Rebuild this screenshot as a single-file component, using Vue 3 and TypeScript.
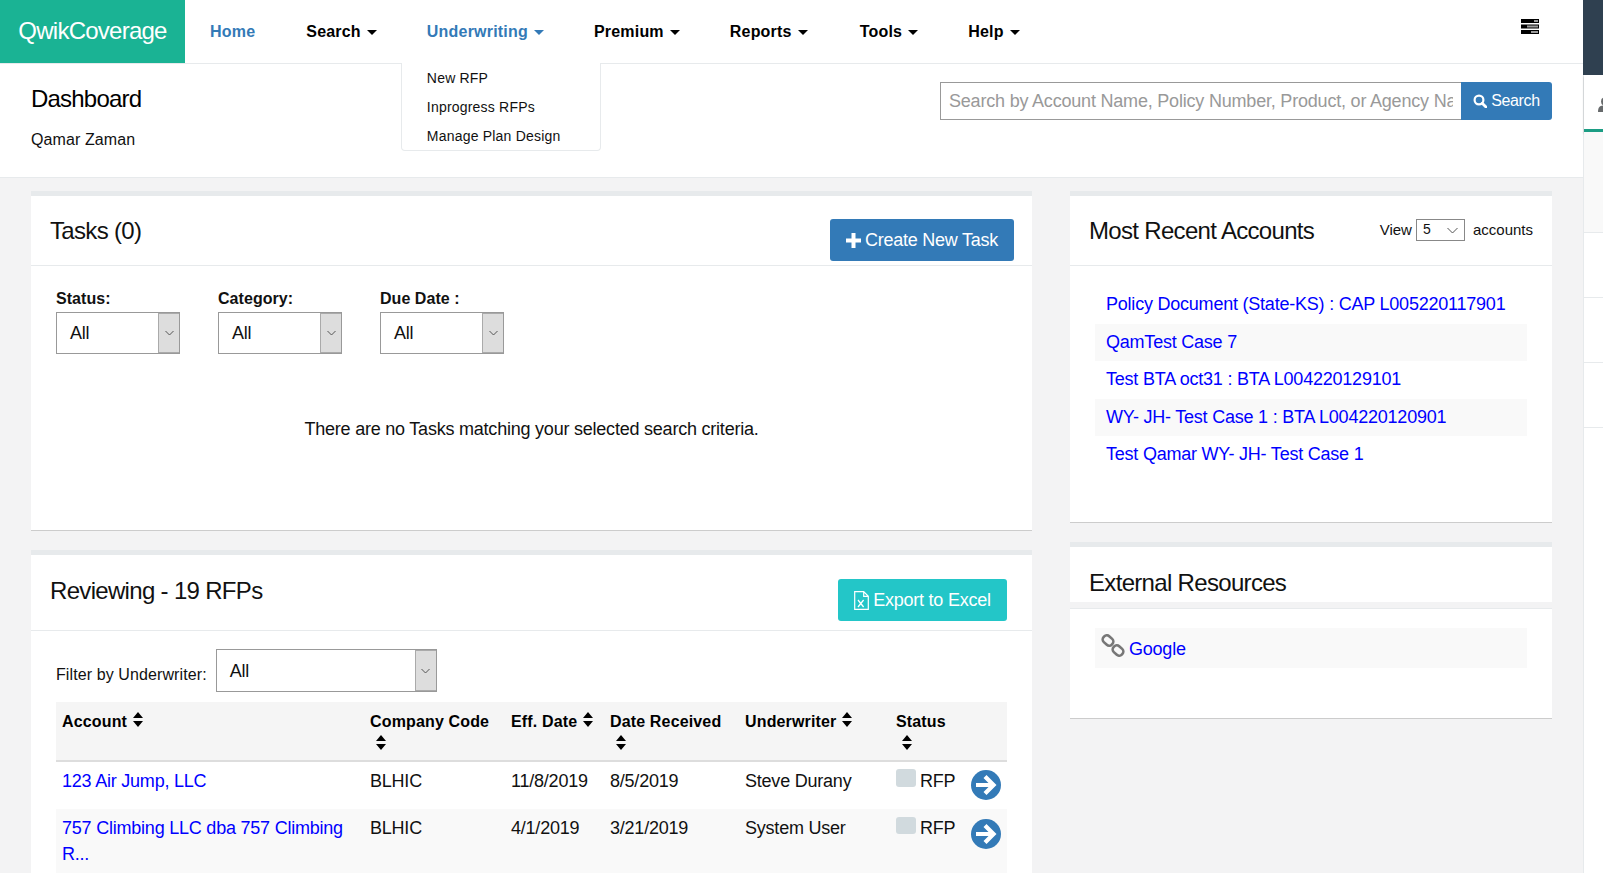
<template>
  <div class="app">
    <div class="main">
      <!-- top nav -->
      <header class="topbar">
        <div class="logo">QwikCoverage</div>
        <ul class="nav">
          <li v-for="item in navItems" :key="item.label" :class="{ active: item.active }">
            <a href="#">{{ item.label }}<span v-if="item.caret" class="caret"></span></a>
            <ul v-if="item.children" class="dropdown">
              <li v-for="child in item.children" :key="child">{{ child }}</li>
            </ul>
          </li>
        </ul>
        <svg class="server-icon" width="18" height="15" viewBox="0 0 18 15">
          <rect x="0" y="0" width="18" height="4" fill="#000" />
          <rect x="13" y="1" width="4" height="2" fill="#999" />
          <rect x="0" y="5.5" width="18" height="4" fill="#000" />
          <rect x="6" y="6.5" width="11" height="2" fill="#999" />
          <rect x="0" y="11" width="18" height="4" fill="#000" />
          <rect x="10" y="12" width="7" height="2" fill="#999" />
        </svg>
      </header>

      <!-- page heading -->
      <section class="page-head">
        <div>
          <h2>Dashboard</h2>
          <p>Qamar Zaman</p>
        </div>
        <div class="search-box">
          <input type="text" placeholder="Search by Account Name, Policy Number, Product, or Agency Name" />
          <button type="button">
            <svg width="14" height="14" viewBox="0 0 14 14">
              <circle cx="6" cy="6" r="4.4" fill="none" stroke="#fff" stroke-width="2.2" />
              <path d="M9.2 9.2 L13 13" stroke="#fff" stroke-width="2.8" stroke-linecap="round" />
            </svg>
            Search
          </button>
        </div>
      </section>

      <div class="content">
        <div class="col-left">
          <!-- tasks -->
          <section class="panel tasks">
            <div class="panel-title tasks-title">
              <h3>Tasks (0)</h3>
              <button type="button" class="btn-create">
                <svg width="15" height="15" viewBox="0 0 15 15">
                  <path d="M5.5 0h4v5.5H15v4H9.5V15h-4V9.5H0v-4h5.5z" fill="#fff" />
                </svg>
                Create New Task
              </button>
            </div>
            <div class="tasks-body">
              <div class="filters">
                <div v-for="f in taskFilters" :key="f" class="filter">
                  <label>{{ f }}</label>
                  <div class="fake-select">
                    <span>All</span>
                    <i>
                      <svg width="9" height="6" viewBox="0 0 9 6"><path d="M.5 1l4 4 4-4" fill="none" stroke="#555" /></svg>
                    </i>
                  </div>
                </div>
              </div>
              <p class="empty">There are no Tasks matching your selected search criteria.</p>
            </div>
          </section>

          <!-- rfps -->
          <section class="panel reviewing">
            <div class="panel-title reviewing-title">
              <h3>Reviewing - 19 RFPs</h3>
              <button type="button" class="btn-export">
                <svg width="15" height="19" viewBox="0 0 15 19">
                  <path d="M.7.7h9l4.6 4.6v13H.7z M9.7.7v4.6h4.6" fill="none" stroke="#fff" stroke-width="1.2" />
                  <path d="M4 9l5.6 7M9.6 9L4 16" stroke="#fff" stroke-width="1.3" />
                </svg>
                Export to Excel
              </button>
            </div>
            <div class="reviewing-body">
              <div class="underwriter-filter">
                <label>Filter by Underwriter:</label>
                <div class="fake-select wide">
                  <span>All</span>
                  <i>
                    <svg width="9" height="6" viewBox="0 0 9 6"><path d="M.5 1l4 4 4-4" fill="none" stroke="#555" /></svg>
                  </i>
                </div>
              </div>
              <table class="rfp-table">
                <colgroup>
                  <col v-for="w in colWidths" :key="w" :width="w" />
                </colgroup>
                <thead>
                  <tr>
                    <th v-for="c in columns" :key="c">{{ c }}<svg class="sort" width="10" height="15" viewBox="0 0 10 15"><path d="M5 0l5 6H0zM5 15L0 9h10z" fill="#000" /></svg></th>
                    <th></th>
                  </tr>
                </thead>
                <tbody>
                  <tr v-for="r in rfps" :key="r.account">
                    <td><a href="#">{{ r.account }}</a></td>
                    <td>{{ r.code }}</td>
                    <td>{{ r.eff }}</td>
                    <td>{{ r.received }}</td>
                    <td>{{ r.underwriter }}</td>
                    <td class="status"><span class="swatch"></span>RFP</td>
                    <td class="go">
                      <svg width="30" height="30" viewBox="0 0 30 30">
                        <circle cx="15" cy="15" r="15" fill="#337ab7" />
                        <path d="M15.5 5l10 10-10 10-3-3 5-5H5v-4h12.500l-5-5z" fill="#fff" />
                      </svg>
                    </td>
                  </tr>
                </tbody>
              </table>
            </div>
          </section>
        </div>

        <div class="col-right">
          <!-- recent accounts -->
          <section class="panel recent">
            <div class="panel-title recent-title">
              <h3>Most Recent Accounts</h3>
              <div class="view-count">
                View
                <div class="mini-select">
                  <span>5</span>
                  <svg width="11" height="7" viewBox="0 0 11 7"><path d="M.5 1l5 5 5-5" fill="none" stroke="#555" /></svg>
                </div>
                accounts
              </div>
            </div>
            <ul class="list">
              <li v-for="a in recentAccounts" :key="a"><a href="#">{{ a }}</a></li>
            </ul>
          </section>

          <!-- external links -->
          <section class="panel external">
            <div class="external-title">
              <h3>External Resources</h3>
            </div>
            <div class="external-body">
              <div class="resource">
                <svg width="24" height="23" viewBox="0 0 24 23">
                  <g fill="none" stroke="#777" stroke-width="2.6">
                    <rect x="1.500" y="2.500" width="11" height="8" rx="3.500" transform="rotate(42 7 6.500)" />
                    <rect x="11.500" y="12.500" width="11" height="8" rx="3.500" transform="rotate(42 17 16.500)" />
                  </g>
                </svg>
                <a href="#">Google</a>
              </div>
            </div>
          </section>
        </div>
      </div>
    </div>

    <!-- right rail -->
    <aside class="rail">
      <div class="rail-top"></div>
      <div class="rail-tab">
        <svg width="16" height="16" viewBox="0 0 16 16">
          <circle cx="8" cy="4.500" r="4" fill="#676a6c" />
          <path d="M1 15c0-5 2-6.500 7-6.500s7 1.500 7 6.500z" fill="#676a6c" />
        </svg>
      </div>
      <div class="rail-grey"></div>
      <div v-for="n in 4" :key="n" class="rail-row"></div>
    </aside>
  </div>
</template>

<script setup lang="ts">
interface NavItem {
  label: string
  caret?: boolean
  active?: boolean
  children?: string[]
}

const navItems: NavItem[] = [
  { label: 'Home', active: true },
  { label: 'Search', caret: true },
  { label: 'Underwriting', caret: true, active: true, children: ['New RFP', 'Inprogress RFPs', 'Manage Plan Design'] },
  { label: 'Premium', caret: true },
  { label: 'Reports', caret: true },
  { label: 'Tools', caret: true },
  { label: 'Help', caret: true }
]

const taskFilters = ['Status:', 'Category:', 'Due Date :']

const colWidths = [308, 141, 99, 135, 151, 72, 45]
const columns = ['Account', 'Company Code', 'Eff. Date', 'Date Received', 'Underwriter', 'Status']

const rfps = [
  { account: '123 Air Jump, LLC', code: 'BLHIC', eff: '11/8/2019', received: '8/5/2019', underwriter: 'Steve Durany' },
  { account: '757 Climbing LLC dba 757 Climbing R...', code: 'BLHIC', eff: '4/1/2019', received: '3/21/2019', underwriter: 'System User' }
]

const recentAccounts = [
  'Policy Document (State-KS) : CAP L005220117901',
  'QamTest Case 7',
  'Test BTA oct31 : BTA L004220129101',
  'WY- JH- Test Case 1 : BTA L004220120901',
  'Test Qamar WY- JH- Test Case 1'
]
</script>

<style>
html,
body {
  margin: 0;
  overflow: hidden;
}
</style>

<style scoped>
* {
  box-sizing: border-box;
}

.app {
  display: flex;
  height: 873px;
  overflow: hidden;
  font-family: "Liberation Sans", Arial, sans-serif;
  font-size: 18px;
  letter-spacing: -0.22px;
  line-height: 1.428;
  color: #111;
}

.main {
  width: 1583px;
  flex: none;
  background: #f3f3f4;
}

/* top nav */
.topbar {
  display: flex;
  height: 64px;
  background: #fff;
  border-bottom: 1px solid #e7eaec;
}

.logo {
  width: 185px;
  height: 63px;
  background: #1ab394;
  color: #fff;
  font-size: 24px;
  letter-spacing: -0.75px;
  line-height: 61px;
  text-align: center;
}

.nav {
  display: flex;
  flex: 1;
  list-style: none;
  margin: 0;
  padding: 0;
}

.nav > li {
  position: relative;
}

.nav > li:first-child {
  padding-right: 1px;
}

.nav > li:nth-child(5) {
  padding-right: 2px;
}

.nav > li > a {
  display: block;
  padding: 20px 25px;
  font-size: 16px;
  font-weight: bold;
  letter-spacing: 0.2px;
  line-height: 23px;
  color: #000;
  text-decoration: none;
}

.nav > li.active > a {
  color: #337ab7;
}

.caret {
  display: inline-block;
  margin-left: 6px;
  vertical-align: middle;
  border-top: 5px solid;
  border-left: 5px solid transparent;
  border-right: 5px solid transparent;
}

.dropdown {
  position: absolute;
  top: 100%;
  left: -1px;
  width: 200px;
  height: 88px;
  margin: 0;
  padding: 1px 0 0;
  list-style: none;
  background: #fff;
  border: 1px solid #e7eaec;
  border-top: none;
  border-radius: 0 0 4px 4px;
  z-index: 5;
}

.dropdown li {
  height: 29px;
  padding-left: 25px;
  font-size: 14px;
  letter-spacing: 0.2px;
  line-height: 29px;
  color: #111;
}

.server-icon {
  margin: 19px 44px 0 0;
}

/* page heading */
.page-head {
  display: flex;
  justify-content: space-between;
  height: 114px;
  padding: 18px 31px 0 31px;
  background: #fff;
  border-bottom: 1px solid #e7eaec;
}

.page-head h2 {
  margin: 0;
  font-size: 24px;
  font-weight: normal;
  letter-spacing: -0.8px;
  line-height: 34px;
  color: #000;
}

.page-head p {
  margin: 12px 0 0;
  font-size: 16px;
  letter-spacing: 0.1px;
  line-height: 23px;
}

.search-box {
  display: flex;
  height: 38px;
}

.search-box input {
  width: 521px;
  height: 38px;
  padding: 0 8px;
  border: 1px solid #999;
  border-right: none;
  font: inherit;
  letter-spacing: -0.2px;
  outline: none;
}

.search-box input::placeholder {
  color: #999;
  opacity: 1;
}

.search-box button {
  display: flex;
  align-items: center;
  justify-content: center;
  gap: 4px;
  width: 91px;
  border: none;
  border-radius: 0 3px 3px 0;
  background: #337ab7;
  color: #fff;
  font-family: inherit;
  font-size: 16px;
  letter-spacing: -0.4px;
}

/* content columns */
.content {
  display: flex;
  gap: 38px;
  padding: 13px 31px 0;
}

.col-left {
  width: 1001px;
}

.col-right {
  width: 482px;
}

.panel {
  background: #fff;
  border-top: 5px solid #e7eaec;
}

h3 {
  margin: 0;
  font-size: 24px;
  font-weight: normal;
  letter-spacing: -0.68px;
  line-height: 34px;
  color: #111;
}

.panel-title {
  display: flex;
  justify-content: space-between;
  border-bottom: 1px solid #e7eaec;
}

.panel-title h3 {
  margin-top: 18px;
}

.reviewing-title h3 {
  margin-top: 19px;
}

.tasks {
  height: 340px;
  margin-bottom: 19px;
  border-bottom: 1px solid #ccc;
}

.tasks-title {
  height: 70px;
  padding: 0 18px 0 19px;
}

.btn-create,
.btn-export {
  display: flex;
  align-items: center;
  justify-content: center;
  gap: 4px;
  height: 42px;
  border: none;
  border-radius: 3px;
  color: #fff;
  font-family: inherit;
  font-size: 18px;
  letter-spacing: -0.25px;
}

.btn-create {
  width: 184px;
  margin-top: 23px;
  background: #337ab7;
}

.tasks-body {
  padding: 20px 25px 0;
}

.filters {
  display: flex;
  gap: 38px;
}

.filter label {
  display: block;
  margin-bottom: 1px;
  font-size: 16px;
  font-weight: bold;
  letter-spacing: 0.05px;
  line-height: 25px;
}

.fake-select {
  display: flex;
  align-items: stretch;
  justify-content: space-between;
  width: 124px;
  height: 42px;
  background: #fff;
  border: 1px solid #999;
}

.fake-select span {
  padding-left: 13px;
  line-height: 40px;
}

.fake-select i {
  display: flex;
  align-items: center;
  justify-content: center;
  width: 21px;
  background: #ddd;
  border: 1px solid #aaa;
  border-width: 1px 0 1px 1px;
}

.fake-select.wide {
  width: 221px;
  height: 43px;
}

.fake-select.wide span {
  line-height: 42px;
}

.empty {
  margin: 63px 0 0;
  text-align: center;
}

.reviewing-title {
  height: 76px;
  padding: 0 25px 0 19px;
}

.btn-export {
  width: 169px;
  margin-top: 24px;
  background: #23c6c8;
}

.reviewing-body {
  padding: 18px 25px 0;
}

.underwriter-filter {
  display: flex;
  gap: 9px;
  margin-bottom: 10px;
}

.underwriter-filter label {
  font-size: 16px;
  letter-spacing: 0.1px;
  line-height: 23px;
  padding-top: 14px;
}

.rfp-table {
  width: 951px;
  table-layout: fixed;
  border-collapse: collapse;
}

.rfp-table th {
  padding: 8px 6px 4px;
  background: #f5f5f5;
  border-bottom: 2px solid #ddd;
  font-size: 16px;
  letter-spacing: 0.15px;
  line-height: 23px;
  text-align: left;
  vertical-align: top;
  color: #000;
}

.sort {
  margin-left: 6px;
}

.rfp-table td {
  padding: 7px 6px 6px;
  vertical-align: top;
}

.rfp-table tbody tr:nth-child(even) td {
  background: #f9f9f9;
}

a {
  color: #00f;
  text-decoration: none;
}

.rfp-table td.status {
  padding-right: 0;
  white-space: nowrap;
}

.swatch {
  display: inline-block;
  width: 20px;
  height: 18px;
  margin-right: 4px;
  vertical-align: top;
  background: #d1dade;
  border-radius: 3px;
}

.rfp-table tbody tr:nth-child(even) .swatch {
  height: 17px;
  margin-top: 1px;
}

.rfp-table td.go {
  padding: 8px 0 9px 9px;
}

.rfp-table tbody tr:nth-child(even) td.go {
  padding-top: 10px;
}

.go svg {
  display: block;
}

/* right column */
.recent {
  height: 332px;
  margin-bottom: 19px;
  border-bottom: 1px solid #ccc;
}

.recent-title {
  height: 70px;
  padding: 0 19px;
}

.view-count {
  display: flex;
  align-items: center;
  gap: 4px;
  height: 22px;
  margin-top: 23px;
  font-size: 15px;
  letter-spacing: 0;
}

.mini-select {
  display: flex;
  align-items: center;
  justify-content: space-between;
  width: 49px;
  height: 22px;
  margin-right: 4px;
  padding: 0 6px;
  border: 1px solid #888;
  font-size: 14px;
}

.list {
  margin: 20px 25px 0;
  padding: 0;
  list-style: none;
}

.list li {
  height: 37.5px;
  padding-left: 11px;
  line-height: 37px;
}

.list li:nth-child(even) {
  background: #f9f9f9;
}

.external {
  height: 177px;
  background: transparent;
  border-bottom: 1px solid #ccc;
}

.external-title {
  height: 55px;
  padding: 19px 19px 0;
  background: #fff;
}

.external-body {
  height: 110px;
  margin-top: 6px;
  padding: 19px 25px 0;
  background: #fff;
  border-top: 1px solid #e7eaec;
}

.resource {
  display: flex;
  align-items: center;
  gap: 4px;
  height: 40px;
  padding: 0 0 0 6px;
  background: #f9f9f9;
}

.resource svg {
  margin-top: -5px;
}

.resource a {
  margin-top: 3px;
}

/* right rail */
.rail {
  flex: 1;
  background: #fff;
  border-left: 1px solid #e7eaec;
}

.rail-top {
  height: 75px;
  margin-left: -1px;
  background: #2f4050;
}

.rail-tab {
  height: 57px;
  padding: 20px 0 0 13px;
  overflow: hidden;
  background: #fff;
  border-bottom: 3px solid #1c9d84;
  box-shadow: 0 2px 2px rgba(0, 0, 0, 0.25);
}

.rail-grey {
  height: 100px;
  background: #f9f9f9;
}

.rail-row {
  height: 65px;
  border-top: 1px solid #e7eaec;
}
</style>
